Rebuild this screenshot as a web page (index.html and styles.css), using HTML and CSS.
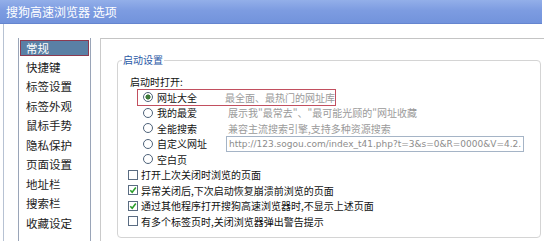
FILE: index.html
```html
<!DOCTYPE html>
<html lang="zh-CN">
<head>
    <meta charset="UTF-8">
    <title>搜狗高速浏览器 选项</title>
    <link rel="stylesheet" href="styles.css">
</head>
<body>
    <div class="window">
        <div class="titlebar">搜狗高速浏览器 选项</div>

        <div class="main">
            <!-- Left category list -->
            <ul class="nav">
                <li class="nav-item active">常规</li>
                <li class="nav-item">快捷键</li>
                <li class="nav-item">标签设置</li>
                <li class="nav-item">标签外观</li>
                <li class="nav-item">鼠标手势</li>
                <li class="nav-item">隐私保护</li>
                <li class="nav-item">页面设置</li>
                <li class="nav-item">地址栏</li>
                <li class="nav-item">搜索栏</li>
                <li class="nav-item">收藏设定</li>
            </ul>

            <!-- Settings panel -->
            <div class="panel">
                <fieldset class="group">
                    <legend>启动设置</legend>
                    <div class="group-label">启动时打开:</div>

                    <div class="radio-list">
                        <div class="radio-row current">
                            <span class="choice"><span class="radio checked"></span>网址大全</span>
                            <span class="desc">最全面、最热门的网址库</span>
                        </div>
                        <div class="radio-row">
                            <span class="choice"><span class="radio"></span>我的最爱</span>
                            <span class="desc">展示我"最常去"、"最可能光顾的"网址收藏</span>
                        </div>
                        <div class="radio-row">
                            <span class="choice"><span class="radio"></span>全能搜索</span>
                            <span class="desc">兼容主流搜索引擎,支持多种资源搜索</span>
                        </div>
                        <div class="radio-row">
                            <span class="choice"><span class="radio"></span>自定义网址</span>
                            <input class="url" type="text" value="http://123.sogou.com/index_t41.php?t=3&amp;s=0&amp;R=0000&amp;V=4.2." readonly>
                        </div>
                        <div class="radio-row">
                            <span class="choice"><span class="radio"></span>空白页</span>
                        </div>
                    </div>

                    <div class="check-list">
                        <div class="check-row"><span class="checkbox"></span>打开上次关闭时浏览的页面</div>
                        <div class="check-row">
                            <span class="checkbox"><svg viewBox="0 0 8 8" width="8" height="8"><polyline points="1.3,4.2 3.2,6.2 6.8,1.6" fill="none" stroke="#2b9e2b" stroke-width="1.6"/></svg></span>异常关闭后,下次启动恢复崩溃前浏览的页面
                        </div>
                        <div class="check-row">
                            <span class="checkbox"><svg viewBox="0 0 8 8" width="8" height="8"><polyline points="1.3,4.2 3.2,6.2 6.8,1.6" fill="none" stroke="#2b9e2b" stroke-width="1.6"/></svg></span>通过其他程序打开搜狗高速浏览器时,不显示上述页面
                        </div>
                        <div class="check-row"><span class="checkbox"></span>有多个标签页时,关闭浏览器弹出警告提示</div>
                    </div>
                </fieldset>
            </div>
        </div>
    </div>
</body>
</html>
```

FILE: styles.css
```css
/* Options window */
* {
    box-sizing: border-box;
}

body {
    margin: 0;
    background: #fff;
    font-family: "Noto Sans CJK SC", sans-serif;
    color: #111;
}

.window {
    width: 544px;
    height: 241px;
    overflow: hidden;
}

.titlebar {
    width: 542px;
    height: 24px;
    line-height: 23px;
    padding-left: 6px;
    font-size: 12px;
    color: #fff;
    background: linear-gradient(to bottom, #93afe9 0%, #7d9ce1 45%, #7293dc 100%);
    border-bottom: 1px solid #6585cf;
}

.main {
    display: flex;
    height: 217px;
    margin-left: 3px;
    border-left: 1px solid #b7c2d3;
    padding: 14px 0 0 14px;
}

/* Category list */
.nav {
    list-style: none;
    margin: 0;
    padding: 0;
    width: 73px;
    border-left: 1px solid #9aa5b8;
    border-right: 1px solid #9aa5b8;
    font-size: 11.5px;
    color: #222;
}

.nav-item {
    height: 19.5px;
    line-height: 19.5px;
    padding-left: 7px;
    white-space: nowrap;
}

.nav-item.active {
    margin: 2px 1px 1.5px;
    height: 16px;
    line-height: 14px;
    padding-left: 5px;
    background: #5a80a5;
    border: 1px solid #8c3a50;
    color: #fff;
}

/* Right panel */
.panel {
    flex: 1;
    margin-left: 9px;
    border-left: 1px solid #cacaca;
    border-top: 1px solid #c4c4c4;
    padding: 15px 3px 0 16px;
}

.group {
    margin: 0;
    padding: 0;
    min-width: 0;
    height: 184px;
    border: 1px solid #d4d4d4;
    border-radius: 4px;
    font-size: 10px;
}

.group legend {
    margin-left: 4px;
    padding: 0 1px;
    line-height: 12px;
    color: #2a58a6;
}

.group-label {
    margin: 8px 0 0 12px;
    height: 15.5px;
    line-height: 15.5px;
}

.radio-list {
    margin-left: 20px;
}

.radio-row {
    display: flex;
    align-items: center;
    height: 15.5px;
    white-space: nowrap;
}

.radio-row.current {
    width: 197px;
    outline: 1px solid #c24f5f;
}

.choice {
    display: flex;
    align-items: center;
    gap: 4px;
    width: 90px;
    padding-left: 5px;
}

.radio {
    width: 10px;
    height: 10px;
    border: 1px solid #4e6279;
    border-radius: 50%;
    background: #fff;
}

.radio.checked {
    background: radial-gradient(circle, #3f7a3a 0 2.2px, #fff 2.9px);
}

.desc {
    color: #9a9a9a;
}

.url {
    margin-left: -2px;
    width: 298px;
    height: 16px;
    padding: 0 2px;
    border: 1px solid #a5b4c6;
    background: #fff;
    font: 9px "DejaVu Sans", sans-serif;
    color: #8c8c8c;
    outline: none;
}

.check-list {
    margin-left: 10px;
}

.check-row {
    display: flex;
    align-items: center;
    gap: 3px;
    height: 15.5px;
    white-space: nowrap;
}

.checkbox {
    display: flex;
    align-items: center;
    justify-content: center;
    width: 10px;
    height: 10px;
    border: 1px solid #5a6c82;
    background: #fff;
}
```
